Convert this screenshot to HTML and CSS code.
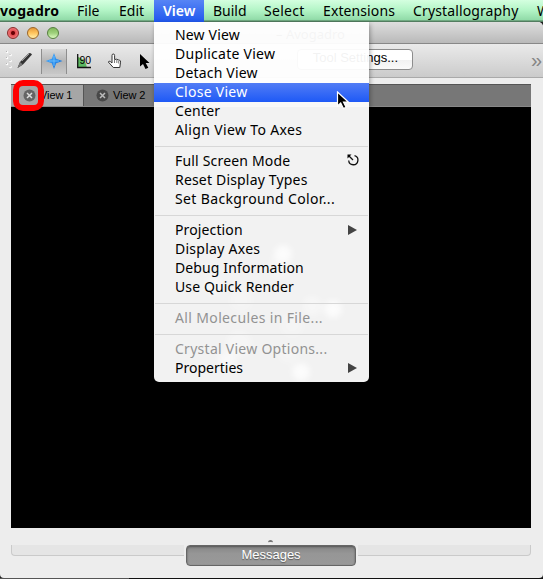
FILE: index.html
```html
<!DOCTYPE html>
<html lang="en">
<head>
<meta charset="utf-8">
<title>Avogadro</title>
<link rel="stylesheet" href="styles.css">
</head>
<body>
<nav class="menubar">
  <span class="app">vogadro</span><span class="w-file">File</span><span class="w-edit">Edit</span><span class="w-view open">View</span><span class="w-build">Build</span><span class="w-select">Select</span><span class="w-ext">Extensions</span><span class="w-crys">Crystallography</span><span>W</span>
</nav>
<main class="window">
  <header class="titlebar"><i class="light red"></i><i class="light amber"></i><i class="light green"></i><span class="title">– Avogadro</span></header>
  <div class="toolbar">
    <svg class="tools" width="154" height="34" viewBox="0 0 154 34">
      <defs>
        <linearGradient id="star" x2="1" y2="1"><stop stop-color="#5bb9ff"/><stop offset="1" stop-color="#0867d8"/></linearGradient>
        <linearGradient id="sel" x2="0" y2="1"><stop stop-color="#d8d8d8"/><stop offset=".5" stop-color="#b4b4b4"/><stop offset="1" stop-color="#c8c8c8"/></linearGradient>
      </defs>
      <g fill="#fff"><circle cx="7" cy="8" r="1.3"/><circle cx="10.500" cy="11" r="1.300"/><circle cx="7" cy="14" r="1.300"/><circle cx="10.500" cy="17" r="1.300"/><circle cx="7" cy="20" r="1.300"/><circle cx="10.500" cy="23" r="1.300"/></g>
      <g fill="#b5b5b5"><circle cx="6.500" cy="7.500" r=".7"/><circle cx="10" cy="10.500" r=".7"/><circle cx="6.500" cy="13.500" r=".7"/><circle cx="10" cy="16.500" r=".7"/><circle cx="6.500" cy="19.500" r=".7"/><circle cx="10" cy="22.500" r=".7"/></g>
      <path d="M17.500 24l2.500-6L28.500 9.500q2-1.500 3.500 1L23 20.500z" fill="#333"/><path d="M17.500 24l2.500-6 3 2.500z" fill="#777"/><path d="M22 17l7-7" stroke="#999"/>
      <path fill="url(#sel)" d="M41 5h26v25H41z"/><path d="M41.500 5v25M66.500 5v25" stroke="#8e8e8e"/>
      <path d="M54 9l2.200 5.800 6.300 2.200-6.300 2.200L54 25l-2.200-5.800-6.300-2.200 6.300-2.200z" fill="url(#star)"/><path d="M54 12v10M49 17h10" stroke="#72c4ff" stroke-width=".8"/>
      <path d="M78 13q8 2 9 11h-9z" fill="#5cb862"/><path d="M77.700 10v13.500H91" fill="none" stroke="#111" stroke-width="1.300"/>
      <text x="79.500" y="20" class="ninety">90</text>
      <path d="M112 19v-7.500q0-1.500 1.300-1.500t1.300 1.500v4l2-.3 1.600.7 1.500.3q1 .5.800 2l-.7 5.300h-6.500l-5-5.500q.7-1.500 2-.5z" fill="#fff" stroke="#333"/><path d="M114.500 16v3M116.800 16v3M118.700 17v2.500" stroke="#555" stroke-width=".8"/>
      <path d="M140 10v12.500l3-2.500 2.500 5 2.800-1.300-2.600-4.700h3.800z" fill="#000"/>
    </svg>
    <button class="settings">Tool Settings...</button><span class="more">»</span>
  </div>
  <section class="views">
    <div class="tabs">
      <div class="tab active"><svg width="13" height="13" viewBox="0 0 13 13"><circle cx="6.500" cy="6.500" r="6" fill="#656565"/><path d="M4 4l5 5M9 4l-5 5" stroke="#ddd" stroke-width="1.500"/></svg><span>View 1</span></div>
      <div class="tab"><svg width="13" height="13" viewBox="0 0 13 13"><circle cx="6.500" cy="6.500" r="6" fill="#484848"/><path d="M4 4l5 5M9 4l-5 5" stroke="#bbb" stroke-width="1.500"/></svg><span>View 2</span></div>
    </div>
    <div class="canvas"></div>
  </section>
  <div class="grip"><i></i></div>
  <footer class="dock"><i class="edge left"></i><button class="messages">Messages</button><i class="edge right"></i></footer>
</main>
<div class="desktop"></div>
<div class="ring"></div>
<div class="menu">
  <svg class="ghost" width="215" height="360" viewBox="0 0 215 360"><g fill="#fff"><circle cx="129" cy="232" r="9"/><circle cx="125" cy="245" r="11" opacity=".35"/><circle cx="158" cy="284" r="10" opacity=".5"/><circle cx="179" cy="287" r="9"/><circle cx="60" cy="264" r="9" opacity=".6"/><circle cx="87" cy="278" r="12" opacity=".3"/><circle cx="138" cy="303" r="12" opacity=".3"/><circle cx="85" cy="322" r="13" opacity=".45"/><circle cx="73" cy="338" r="9" opacity=".7"/><circle cx="134" cy="332" r="10" opacity=".3"/><circle cx="147" cy="350" r="9"/></g></svg>
  <ul>
    <li><span class="s2">New View</span></li>
    <li><span class="s3">Duplicate View</span></li>
    <li><span class="s2">Detach View</span></li>
    <li class="hot"><span class="s3">Close View</span></li>
    <li><span class="s2">Center</span></li>
    <li><span class="s4">Align View To Axes</span></li>
    <li class="sep"></li>
    <li><span class="s2">Full Screen Mode</span><svg class="key" width="12" height="12" viewBox="0 0 12 12"><path d="M7.500 1.700A4.600 4.600 0 1 1 1.700 6.500M1.500 1.500l4.500 4.500" fill="none" stroke="#111" stroke-width="1.300"/><path d="M.5.500h4L.5 4.500z"/></svg></li>
    <li><span class="s2">Reset Display Types</span></li>
    <li><span class="s4">Set Background Color...</span></li>
    <li class="sep"></li>
    <li><span class="s1">Projection</span><i class="sub"></i></li>
    <li><span class="s3">Display Axes</span></li>
    <li><span class="s1">Debug Information</span></li>
    <li><span class="s1">Use Quick Render</span></li>
    <li class="sep"></li>
    <li class="off"><span class="s4">All Molecules in File...</span></li>
    <li class="sep"></li>
    <li class="off"><span class="s3">Crystal View Options...</span></li>
    <li><span>Properties</span><i class="sub"></i></li>
  </ul>
</div>
<svg class="cursor" width="14" height="20" viewBox="0 0 14 20"><path d="M1.500 1v14l3.200-3 2.700 5.500 2.700-1.200L7.500 11h4.800z" fill="#000" stroke="#fff" stroke-width="1.200"/></svg>
</body>
</html>
```
FILE: styles.css
```css
* { box-sizing: border-box; }
body { margin: 0; width: 543px; height: 579px; overflow: hidden; position: relative; background: #222; font: 14px/19px "Noto Sans", sans-serif; color: #000; }
.menubar { display: flex; height: 22px; overflow: hidden; white-space: nowrap; line-height: 22px; background: linear-gradient(#d4ffe0, #b4f5c7 45%, #91dba8 90%, #537d60 96%); }
.menubar span { flex: none; padding-left: 9px; }
.menubar .app { width: 68px; padding: 0; font-weight: 700; letter-spacing: .25px; }
.w-file { width: 42px; }
.w-edit { width: 44px; }
.w-view { width: 50px; }
.w-build { width: 51px; }
.w-select { width: 59px; letter-spacing: .3px; }
.w-ext { width: 90px; letter-spacing: .1px; }
.w-crys { width: 124px; letter-spacing: .13px; }
.menubar .open { color: #fff; font-weight: 600; background: linear-gradient(#5785f5, #2057ee); }
.window { height: 556px; background: #ededed; border-radius: 0 5px 4px 4px; overflow: hidden; }
.titlebar { height: 22px; display: flex; gap: 8px; padding: 5px 0 0 7px; background: linear-gradient(#dedede, #b9b9b9); border-bottom: 1px solid #888; }
.title { margin-left: 209px; font: 13px/14px "Noto Sans", sans-serif; color: #333; }
.light { width: 12px; height: 12px; border-radius: 50%; border: 1px solid #777; }
.red { background: radial-gradient(circle at 50% 50%, #680004 0 1.500px, #e44c50 2.500px, #fb9c9c 7px); border-color: #8c2929; }
.amber { background: linear-gradient(#e79a3a, #ffc55e 50%, #ffefaa); border-color: #9c6527; }
.green { background: linear-gradient(#82b95c, #9ed07b 50%, #dcfac0); border-color: #557f3e; }
.toolbar { height: 34px; display: flex; align-items: flex-start; background: linear-gradient(#eaeaea, #cbcbcb); border-bottom: 1px solid #aaa; }
.tools { flex: none; }
.ninety { font: 10.500px "Liberation Sans", sans-serif; }
.settings { margin: 5px 0 0 143px; width: 116px; height: 21px; padding: 0 14px 4px 0; text-align: right; white-space: nowrap; border: 1px solid #8d8d8d; border-radius: 4px; background: linear-gradient(#fff 50%, #f1f1f1 52%, #fafafa); font: 13px "Liberation Sans", sans-serif; color: #000; }
.more { margin: 6px 0 0 118px; font: 20px/20px "Liberation Sans", sans-serif; color: #858585; }
.views { margin: 6px 12px 0 11px; }
.tabs { height: 23px; display: flex; background: #777; border-top: 1px solid #555; border-bottom: 1px solid #888; }
.tab { width: 73px; padding: 4px 0 0 12px; display: flex; gap: 4px; font: 11px/14px "Liberation Sans", sans-serif; letter-spacing: -.1px; white-space: nowrap; }
.tab svg { flex: none; }
.tab span { margin-top: -1px; }
.tab.active { background: #a6a6a6; border-right: 1px solid #555; }
.canvas { height: 421px; background: #000; }
.grip { height: 17px; padding: 12px 0 0 268px; }
.grip i { display: block; width: 5px; height: 3px; border-top: 2px solid #777; border-radius: 3px 3px 0 0; }
.dock { height: 22px; display: flex; padding: 0 12px 0 11px; }
.edge { height: 11px; background: #e5e5e5; border: 0 solid #cacaca; border-bottom-width: 1px; }
.left { width: 173px; margin-right: 2px; border-left-width: 1px; border-bottom-left-radius: 4px; }
.right { width: 173px; margin-left: 2px; border-right-width: 1px; border-bottom-right-radius: 4px; }
.messages { width: 170px; height: 21px; flex: none; padding: 0 0 3px; border: 1px solid #666; border-radius: 4px; background: linear-gradient(#858585, #969696 40%, #999); box-shadow: inset 0 1px 2px #555; color: #fff; font: 13px/15px "Liberation Sans", sans-serif; text-shadow: 0 1px 1px #555; }
.desktop { height: 1px; background: linear-gradient(90deg, #555 0 129px, #111 129px); }
.ring { position: absolute; left: 13px; top: 80px; width: 31px; height: 31px; border: 6px solid #f00; border-radius: 10px; }
.menu { position: absolute; left: 154px; top: 22px; width: 215px; height: 360px; background: rgba(255, 255, 255, .95); border-radius: 0 0 5px 5px; overflow: hidden; box-shadow: 1px 2px 5px #0005; }
.ghost { position: absolute; left: 0; top: 0; filter: blur(3px); opacity: .75; }
.menu ul { position: relative; margin: 0; padding: 4px 0 0; list-style: none; }
.menu li { height: 19px; padding: 0 12px 0 21px; display: flex; justify-content: space-between; align-items: center; white-space: nowrap; }
.menu li span { margin-top: -2px; }
.menu .sep { height: 12px; padding: 0; }
.sep::before { content: ""; flex: 1; margin: 0 1px; height: 1px; background: #d7d7d7; }
.s1 { letter-spacing: .12px; }
.s2 { letter-spacing: .18px; }
.s3 { letter-spacing: .27px; }
.s4 { letter-spacing: .36px; }
.menu .hot { color: #fff; background: linear-gradient(#527df5, #1e59f6); }
.menu .off { color: #929292; }
.menu .key { margin: -3px -2px 0 0; }
.sub { margin-top: -2px; border: solid transparent; border-width: 5px 0 5px 9px; border-left-color: #444; }
.cursor { position: absolute; left: 336px; top: 91px; }
```
